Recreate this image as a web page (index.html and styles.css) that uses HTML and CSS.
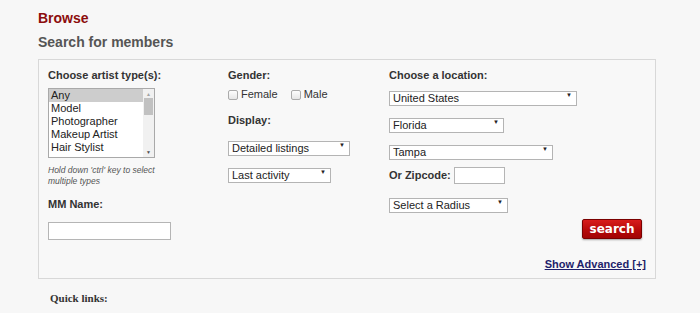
FILE: index.html
```html
<!DOCTYPE html>
<html lang="en">
<head>
    <meta charset="UTF-8">
    <meta name="viewport" content="width=device-width, initial-scale=1.0">
    <title>Browse</title>
    <link rel="stylesheet" href="styles.css">
</head>
<body>
    <div class="page">
        <h1 class="browse">Browse</h1>
        <h2 class="subtitle">Search for members</h2>

        <form class="search-box">
            <div class="columns">
                <div class="col col-type">
                    <div class="label">Choose artist type(s):</div>
                    <div class="listbox" role="listbox">
                        <ul class="list-items">
                            <li class="selected">Any</li>
                            <li>Model</li>
                            <li>Photographer</li>
                            <li>Makeup Artist</li>
                            <li>Hair Stylist</li>
                        </ul>
                        <div class="scrollbar">
                            <span class="sb-up">&#9650;</span>
                            <span class="sb-thumb"></span>
                            <span class="sb-down">&#9660;</span>
                        </div>
                    </div>
                    <p class="hint">Hold down 'ctrl' key to select multiple types</p>
                    <div class="label name-label">MM Name:</div>
                    <input type="text" class="text-input name-input">
                </div>

                <div class="col col-gender">
                    <div class="label">Gender:</div>
                    <div class="checks">
                        <label class="check"><input type="checkbox"> Female</label>
                        <label class="check"><input type="checkbox"> Male</label>
                    </div>
                    <div class="label display-label">Display:</div>
                    <span class="dropdown w-detailed"><select><option>Detailed listings</option></select></span>
                    <span class="dropdown w-activity"><select><option>Last activity</option></select></span>
                </div>

                <div class="col col-location">
                    <div class="label">Choose a location:</div>
                    <span class="dropdown w-country"><select><option>United States</option></select></span>
                    <span class="dropdown w-state"><select><option>Florida</option></select></span>
                    <span class="dropdown w-city"><select><option>Tampa</option></select></span>
                    <div class="zip-row">
                        <span class="label">Or Zipcode:</span>
                        <input type="text" class="text-input zip-input">
                    </div>
                    <span class="dropdown w-radius"><select><option>Select a Radius</option></select></span>
                    <div class="button-row">
                        <button type="button" class="search-btn">search</button>
                    </div>
                </div>
            </div>
            <div class="advanced-row">
                <a href="#" class="advanced">Show Advanced [+]</a>
            </div>
        </form>

        <h3 class="quick-links">Quick links:</h3>
    </div>
</body>
</html>
```

FILE: styles.css
```css
body {
    margin: 0;
    background-color: #f7f7f7;
    font-family: "Liberation Sans", Arial, sans-serif;
    color: #333;
}
.page {
    padding: 10px 0 0 38px;
}
.browse {
    margin: 0;
    font-size: 14px;
    line-height: 16px;
    color: #8c0d0d;
}
.subtitle {
    margin: 8px 0 0;
    font-size: 14px;
    line-height: 16px;
    color: #555;
}
.search-box {
    width: 594px;
    margin-top: 9px;
    padding: 9px 13px 7px 9px;
    border: 1px solid #d8d8d8;
    background-color: #f8f8f8;
}
.columns {
    display: flex;
}
.col {
    display: flex;
    flex-direction: column;
    align-items: flex-start;
}
.col-type {
    width: 180px;
}
.col-gender {
    width: 161px;
}
.col-location {
    flex: 1;
}
.label {
    font-size: 11px;
    line-height: 13px;
    font-weight: bold;
    color: #333;
}

/* artist type list */
.listbox {
    display: flex;
    width: 105px;
    height: 68px;
    margin-top: 6px;
    border: 1px solid #a9a9a9;
    background-color: #fff;
}
.list-items {
    flex: 1;
    margin: 0;
    padding: 0;
    list-style: none;
    font-size: 11px;
    line-height: 13px;
    color: #222;
}
.list-items li {
    padding-left: 2px;
}
.list-items li.selected {
    background-color: #cdcdcd;
}
.scrollbar {
    position: relative;
    width: 11px;
    background-color: #f1f1f1;
}
.sb-up,
.sb-down {
    position: absolute;
    left: 0;
    width: 11px;
    text-align: center;
    font-size: 5px;
    line-height: 8px;
    color: #a3a3a3;
}
.sb-up {
    top: 1px;
}
.sb-down {
    bottom: 1px;
    color: #505050;
}
.sb-thumb {
    position: absolute;
    top: 9px;
    left: 1px;
    width: 9px;
    height: 17px;
    background-color: #c1c1c1;
}
.hint {
    width: 116px;
    margin: 7px 0 0;
    font-size: 8.5px;
    line-height: 11px;
    font-style: italic;
    color: #555;
}
.name-label {
    margin-top: 11px;
}
.text-input {
    box-sizing: border-box;
    height: 18px;
    border: 1px solid #b5b5b5;
    background-color: #fff;
    padding: 0 3px;
}
.name-input {
    width: 123px;
    margin-top: 11px;
}

/* gender + display */
.checks {
    display: flex;
    gap: 13px;
    margin-top: 6px;
    font-size: 11px;
    line-height: 13px;
    color: #333;
}
.check {
    display: flex;
    align-items: center;
    gap: 3px;
}
.check input {
    appearance: none;
    width: 10px;
    height: 10px;
    margin: 0;
    border: 1px solid #ababab;
    border-radius: 2px;
    background: linear-gradient(#fdfdfd, #e6e6e6);
}
.display-label {
    margin-top: 13px;
}
.dropdown {
    position: relative;
    display: block;
    height: 15px;
}
.dropdown select {
    appearance: none;
    box-sizing: border-box;
    width: 100%;
    height: 15px;
    margin: 0;
    padding: 0 0 0 3px;
    border: 1px solid #b4b4b4;
    border-radius: 0;
    background-color: #fff;
    font-family: "Liberation Sans", Arial, sans-serif;
    font-size: 11px;
    line-height: 13px;
    color: #222;
}
.dropdown::after {
    content: "\25BC";
    position: absolute;
    top: 0;
    right: 5px;
    font-size: 6px;
    line-height: 15px;
    color: #222;
    pointer-events: none;
}
.w-detailed {
    width: 122px;
    margin-top: 11px;
}
.w-activity {
    width: 103px;
    margin-top: 12px;
}

/* location */
.w-country {
    width: 188px;
    margin-top: 6px;
}
.w-state {
    width: 115px;
    margin-top: 12px;
}
.w-city {
    width: 164px;
    margin-top: 12px;
}
.zip-row {
    display: flex;
    align-items: center;
    gap: 3px;
    margin-top: 10px;
}
.zip-input {
    width: 51px;
    height: 17px;
}
.w-radius {
    width: 119px;
    margin-top: 11px;
}
.button-row {
    align-self: stretch;
    display: flex;
    justify-content: flex-end;
    margin-top: 9px;
}
.search-btn {
    width: 60px;
    height: 20px;
    padding: 0;
    border: 1px solid #7a0000;
    border-radius: 2px;
    background: linear-gradient(#d81c1c, #b40808 60%, #a20404);
    box-shadow: 0 1px 2px rgba(0,0,0,0.35);
    font-family: "DejaVu Sans", Verdana, sans-serif;
    font-size: 12px;
    font-weight: bold;
    color: #fff;
    cursor: pointer;
}
.advanced-row {
    margin-top: 16px;
    margin-right: -4px;
    text-align: right;
    line-height: 13px;
}
.advanced {
    font-size: 11px;
    font-weight: bold;
    color: #1e1e6a;
}
.quick-links {
    margin: 13px 0 0 12px;
    font-family: "Liberation Serif", "Times New Roman", serif;
    font-size: 11px;
    line-height: 13px;
    color: #333;
}
```
